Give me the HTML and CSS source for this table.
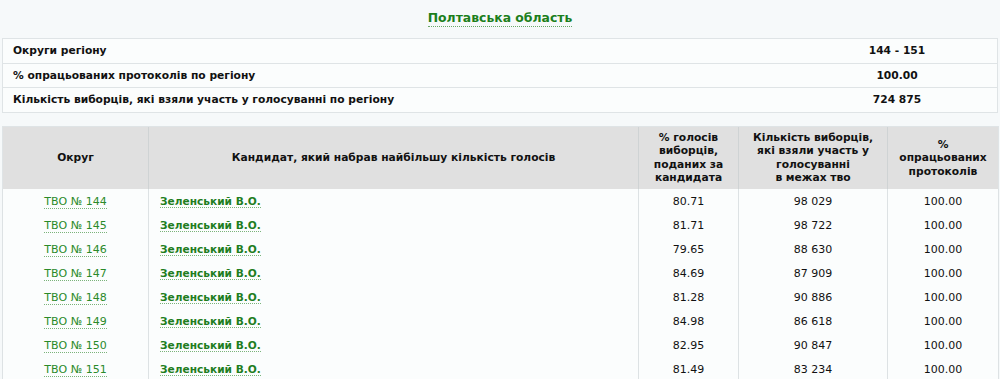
FILE: index.html
```html
<!DOCTYPE html>
<html lang="uk">
<head>
<meta charset="utf-8">
<link rel="stylesheet" href="styles.css">
</head>
<body>
<div class="page">
  <h1 class="title"><a class="title-link">Полтавська область</a></h1>
  <table class="info">
    <tr><td class="label">Округи регіону</td><td class="val">144 - 151</td></tr>
    <tr><td class="label">% опрацьованих протоколів по регіону</td><td class="val">100.00</td></tr>
    <tr><td class="label">Кількість виборців, які взяли участь у голосуванні по регіону</td><td class="val">724 875</td></tr>
  </table>
  <table class="results">
    <colgroup>
      <col class="c1"><col class="c2"><col class="c3"><col class="c4"><col class="c5">
    </colgroup>
    <thead>
      <tr>
        <th>Округ</th>
        <th>Кандидат, який набрав найбільшу кількість голосів</th>
        <th>% голосів виборців, поданих за кандидата</th>
        <th>Кількість виборців, які взяли участь у голосуванні<br>в межах тво</th>
        <th>%<br>опрацьованих протоколів</th>
      </tr>
    </thead>
    <tbody>
      <tr><td class="ctr"><a class="lnk">ТВО № 144</a></td><td class="name"><a class="lnk b">Зеленський В.О.</a></td><td class="ctr">80.71</td><td class="ctr">98 029</td><td class="ctr">100.00</td></tr>
      <tr><td class="ctr"><a class="lnk">ТВО № 145</a></td><td class="name"><a class="lnk b">Зеленський В.О.</a></td><td class="ctr">81.71</td><td class="ctr">98 722</td><td class="ctr">100.00</td></tr>
      <tr><td class="ctr"><a class="lnk">ТВО № 146</a></td><td class="name"><a class="lnk b">Зеленський В.О.</a></td><td class="ctr">79.65</td><td class="ctr">88 630</td><td class="ctr">100.00</td></tr>
      <tr><td class="ctr"><a class="lnk">ТВО № 147</a></td><td class="name"><a class="lnk b">Зеленський В.О.</a></td><td class="ctr">84.69</td><td class="ctr">87 909</td><td class="ctr">100.00</td></tr>
      <tr><td class="ctr"><a class="lnk">ТВО № 148</a></td><td class="name"><a class="lnk b">Зеленський В.О.</a></td><td class="ctr">81.28</td><td class="ctr">90 886</td><td class="ctr">100.00</td></tr>
      <tr><td class="ctr"><a class="lnk">ТВО № 149</a></td><td class="name"><a class="lnk b">Зеленський В.О.</a></td><td class="ctr">84.98</td><td class="ctr">86 618</td><td class="ctr">100.00</td></tr>
      <tr><td class="ctr"><a class="lnk">ТВО № 150</a></td><td class="name"><a class="lnk b">Зеленський В.О.</a></td><td class="ctr">82.95</td><td class="ctr">90 847</td><td class="ctr">100.00</td></tr>
      <tr><td class="ctr"><a class="lnk">ТВО № 151</a></td><td class="name"><a class="lnk b">Зеленський В.О.</a></td><td class="ctr">81.49</td><td class="ctr">83 234</td><td class="ctr">100.00</td></tr>
    </tbody>
  </table>
</div>
</body>
</html>
```
FILE: styles.css
```css
html, body {
  margin: 0;
  padding: 0;
  background: #f6f9fa;
}
body {
  font-family: "DejaVu Sans", Verdana, sans-serif;
  font-size: 11px;
  color: #111;
}
.page {
  padding: 0 2px;
}
.title {
  margin: 0;
  height: 38px;
  box-sizing: border-box;
  padding-top: 10px;
  text-align: center;
  font-size: 12.4px;
  font-weight: bold;
  line-height: 16px;
}
.title-link {
  color: #1c7f1c;
  border-bottom: 1px dotted #6aa86a;
  padding-bottom: 1px;
}
.info {
  width: 996px;
  border-collapse: collapse;
  background: #fbfdfd;
}
.info td {
  border-top: 1px solid #dfe4e6;
  border-bottom: 1px solid #dfe4e6;
  height: 23.5px;
  padding: 0 0 0 10px;
  font-weight: bold;
  font-size: 10.7px;
  vertical-align: middle;
}
.info tr td:first-child { border-left: 1px solid #dfe4e6; }
.info tr td:last-child { border-right: 1px solid #dfe4e6; }
.info .val {
  width: 200px;
  padding: 0;
  text-align: center;
}
.results {
  margin-top: 13px;
  width: 996px;
  border-collapse: collapse;
  table-layout: fixed;
  background: #fbfdfd;
}
.c1 { width: 146px; }
.c2 { width: 490px; }
.c3 { width: 100px; }
.c4 { width: 149px; }
.c5 { width: 111px; }
.results th {
  background: #e0e0e0;
  height: 63px;
  box-sizing: border-box;
  padding: 3px 6px;
  font-weight: bold;
  font-size: 10.7px;
  line-height: 13.5px;
  text-align: center;
  vertical-align: middle;
  border-left: 1px solid #cfd3d4;
  border-top: 1px solid #dfe4e6;
}
.results th:first-child { border-left: 1px solid #dfe4e6; }
.results th:last-child { border-right: 1px solid #dfe4e6; }
.results td {
  height: 24px;
  padding: 1px 0 0;
  box-sizing: border-box;
  vertical-align: middle;
  line-height: 14px;
  border-left: 1px solid #dde2e4;
}
.results td:last-child { border-right: 1px solid #dde2e4; }
.results .ctr { text-align: center; }
.results .name { padding-left: 11px; }
.lnk {
  color: #2a8a2a;
  border-bottom: 1px dotted #7ab37a;
}
.lnk.b {
  font-weight: bold;
  font-size: 10.6px;
  color: #1f7d1f;
}
```
